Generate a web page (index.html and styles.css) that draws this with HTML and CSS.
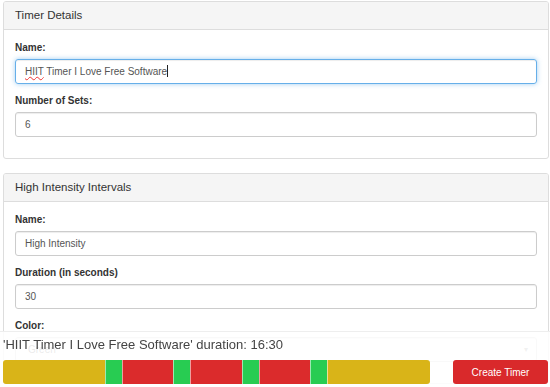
FILE: index.html
```html
<!DOCTYPE html>
<html lang="en">
<head>
  <meta charset="UTF-8">
  <title>HIIT Timer</title>
  <link rel="stylesheet" href="styles.css">
</head>
<body>

  <div class="page">
    <!-- Timer details -->
    <div class="panel">
      <div class="panel-heading">Timer Details</div>
      <div class="panel-body">
        <div class="form-group">
          <label>Name:</label>
          <div class="form-control focused"><span class="misspelled">HIIT</span> Timer I Love Free Software<span class="caret"></span></div>
        </div>
        <div class="form-group">
          <label>Number of Sets:</label>
          <div class="form-control">6</div>
        </div>
      </div>
    </div>

    <!-- High intensity intervals -->
    <div class="panel">
      <div class="panel-heading">High Intensity Intervals</div>
      <div class="panel-body">
        <div class="form-group">
          <label>Name:</label>
          <div class="form-control">High Intensity</div>
        </div>
        <div class="form-group">
          <label>Duration (in seconds)</label>
          <div class="form-control">30</div>
        </div>
        <div class="form-group">
          <label>Color:</label>
          <div class="form-control select">Green<span class="arrow">&#9662;</span></div>
        </div>
      </div>
    </div>
  </div>

  <!-- Summary bar -->
  <div class="summary">
    <div class="summary-title">'HIIT Timer I Love Free Software' duration: 16:30</div>
    <div class="summary-row">
      <div class="timeline">
        <div class="seg warm"></div>
        <div class="seg high"></div>
        <div class="seg low"></div>
        <div class="seg high"></div>
        <div class="seg low"></div>
        <div class="seg high"></div>
        <div class="seg low"></div>
        <div class="seg high"></div>
        <div class="seg warm"></div>
      </div>
      <button class="create-btn">Create Timer</button>
    </div>
  </div>

</body>
</html>
```

FILE: styles.css
```css
* {
  margin: 0;
  padding: 0;
  box-sizing: border-box;
}

body {
  font-family: 'Liberation Sans', Arial, sans-serif;
  font-size: 10px;
  color: #333;
  background-color: #fff;
}

.page {
  padding: 1px 1px 0 3px;
}

.panel {
  border: 1px solid #ddd;
  border-radius: 3px;
  margin-bottom: 14px;
  overflow: hidden;
}

.panel-heading {
  background-color: #f5f5f5;
  border-bottom: 1px solid #ddd;
  height: 28px;
  line-height: 27px;
  padding: 0 11px;
  font-size: 11.5px;
  color: #333;
}

.panel-body {
  padding: 11px;
}

.form-group {
  margin-bottom: 10px;
}

.form-group label {
  display: block;
  font-weight: bold;
  line-height: 14px;
  margin-bottom: 4px;
}

.form-control {
  position: relative;
  height: 25px;
  line-height: 23px;
  padding: 0 9px;
  border: 1px solid #ccc;
  border-radius: 3px;
  color: #555;
  box-shadow: inset 0 1px 1px rgba(0, 0, 0, 0.075);
}

.form-control.focused {
  border-color: #66afe9;
  box-shadow: inset 0 1px 1px rgba(0, 0, 0, 0.075), 0 0 5px rgba(102, 175, 233, 0.6);
}

.form-control.select {
  padding-left: 12px;
}

.misspelled {
  text-decoration: underline wavy #e33;
  text-decoration-thickness: 1px;
}

.caret {
  display: inline-block;
  width: 1px;
  height: 12px;
  background-color: #222;
  vertical-align: -2px;
}

.arrow {
  position: absolute;
  right: 8px;
  top: 0;
  font-size: 8px;
  color: #888;
}

.summary {
  position: fixed;
  left: 0;
  right: 0;
  bottom: 0;
  background-color: rgba(255, 255, 255, 0.88);
  border-top: 1px solid #eee;
  padding: 4px 2px 3px 3px;
}

.summary-title {
  font-size: 13px;
  line-height: 18px;
  color: #444;
  margin-bottom: 6px;
}

.summary-row {
  display: flex;
  align-items: center;
  gap: 23px;
}

.timeline {
  display: flex;
  width: 427px;
  height: 24px;
  border-radius: 3px;
  overflow: hidden;
}

.seg {
  height: 100%;
  border-left: 1px solid rgba(255, 255, 255, 0.55);
}

.seg:first-child {
  border-left: none;
}

.seg.warm {
  flex: 103;
  background-color: #d9b418;
}

.seg.high {
  flex: 16;
  background-color: #28cc52;
}

.seg.low {
  flex: 51;
  background-color: #db2b2c;
}

.create-btn {
  width: 95px;
  height: 24px;
  border: none;
  border-radius: 3px;
  background-color: #d9292b;
  color: #fff;
  font-family: 'Liberation Sans', Arial, sans-serif;
  font-size: 10px;
  cursor: pointer;
}
```
